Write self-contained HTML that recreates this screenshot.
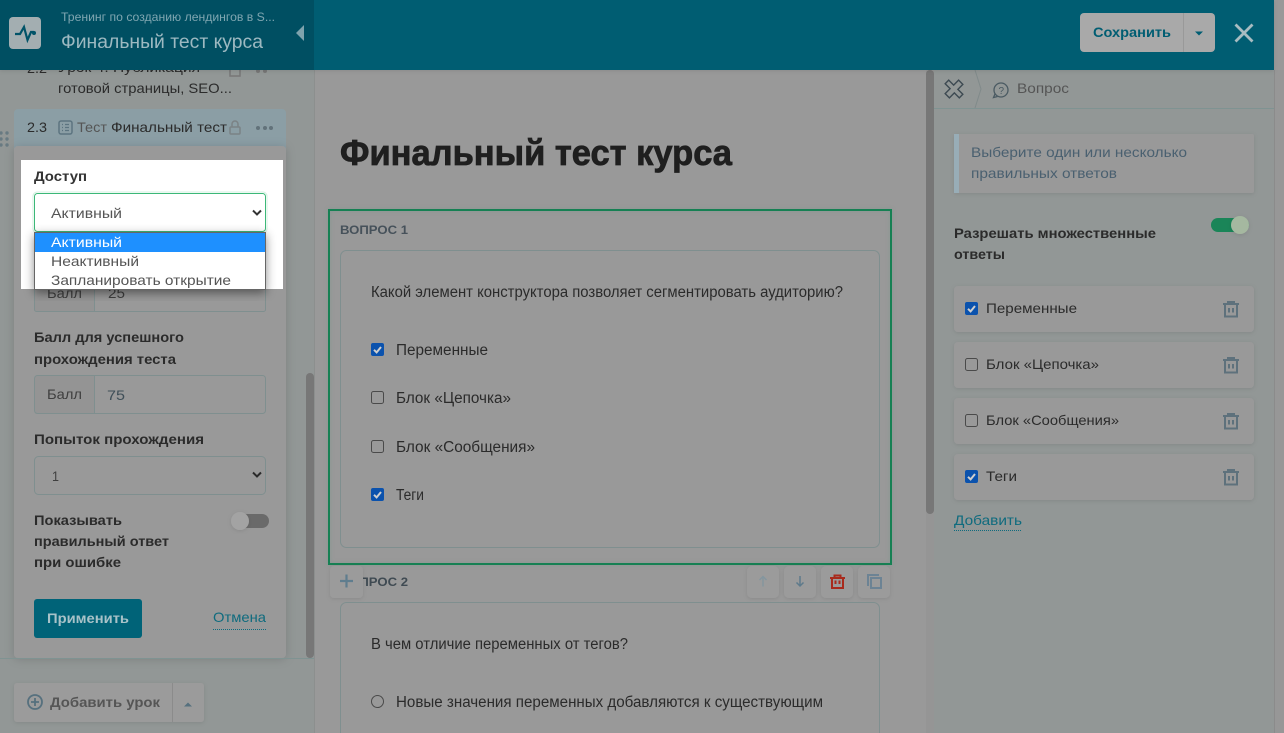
<!DOCTYPE html>
<html lang="ru"><head><meta charset="utf-8"><title>Финальный тест курса</title>
<style>
html,body{margin:0;padding:0;background:#999;overflow:hidden}
svg{display:block}
text{font-family:"Liberation Sans","DejaVu Sans",sans-serif;font-size:14px;fill:#2b2b2b}
.b{font-weight:bold}
</style></head><body>
<svg width="1284" height="733" viewBox="0 0 1284 733" xmlns="http://www.w3.org/2000/svg">
<defs>
<filter id="s" x="-20%" y="-20%" width="140%" height="140%"><feDropShadow dx="0" dy="1" stdDeviation="2" flood-color="#000" flood-opacity=".1"/></filter>
<filter id="p" x="-20%" y="-20%" width="140%" height="140%"><feDropShadow dx="0" dy="1" stdDeviation="5" flood-color="#000" flood-opacity=".16"/></filter>
<filter id="s2" x="-20%" y="-20%" width="140%" height="140%"><feDropShadow dx="0" dy="3" stdDeviation="5" flood-color="#000" flood-opacity=".45"/></filter>
<filter id="s3" x="-10%" y="-10%" width="120%" height="120%"><feDropShadow dx="0" dy="0" stdDeviation="2" flood-color="#1d8a5e" flood-opacity=".18"/></filter>
<g id="tr" fill="none" stroke="#5e717c" stroke-width="2"><path d="M0 3h16M5 3V1h6v2M2 3v12.500h12V3M6 7v4.500M10 7v4.500"/></g>
<g id="cb"><rect width="13" height="13" rx="2" fill="#0b52ad"/><path d="M3 6.800l2.600 2.600L10 4" fill="none" stroke="#cfcfcf" stroke-width="2"/></g>
<g id="cu"><rect x=".5" y=".5" width="12" height="12" rx="2" fill="#999" stroke="#4a4a4a"/></g>
</defs>

<!-- backgrounds -->
<rect width="1284" height="733" fill="#999"/>
<rect x="0" y="70" width="314" height="663" fill="#929796"/>
<rect x="314" y="70" width="1" height="663" fill="#8c8f8e"/>
<rect x="934" y="70" width="340" height="663" fill="#929796"/>
<rect x="926" y="70" width="8" height="663" fill="#959595"/>
<rect x="926" y="70" width="8" height="444" rx="4" fill="#777"/>
<rect x="1274" y="70" width="10" height="663" fill="#979797"/>
<rect x="1274" y="70" width="1" height="663" fill="#8b8b8b"/>

<!-- left list -->
<text x="27" y="73" textLength="20" lengthAdjust="spacingAndGlyphs">2.2</text>
<text x="58" y="72" textLength="142" lengthAdjust="spacingAndGlyphs">Урок 4. Публикация</text>
<text x="58" y="93" textLength="174" lengthAdjust="spacingAndGlyphs">готовой страницы, SEO...</text>
<rect x="230" y="69" width="10" height="7" fill="none" stroke="#777" stroke-width="1.5"/>
<circle cx="258" cy="71" r="2" fill="#777"/><circle cx="265" cy="71" r="2" fill="#777"/>
<rect x="14" y="109" width="272" height="50" rx="4" fill="#8b9ea5"/>
<text x="27" y="132" textLength="20" lengthAdjust="spacingAndGlyphs">2.3</text>
<rect x="59" y="121" width="13" height="13" rx="2" fill="none" stroke="#5c7480" stroke-width="1.5"/>
<path d="M62 124.500h1M65 124.500h4M62 127.500h1M65 127.500h4M62 130.500h1M65 130.500h4" stroke="#5c7480" stroke-width="1.200"/>
<text x="77" y="132" textLength="30" lengthAdjust="spacingAndGlyphs" style="fill:#555">Тест</text>
<text x="111" y="132" textLength="116" lengthAdjust="spacingAndGlyphs">Финальный тест</text>
<path d="M232 127v-3a3 3 0 0 1 6 0v3" fill="none" stroke="#7b8285" stroke-width="1.500"/><rect x="230" y="127" width="10" height="7" rx="1" fill="none" stroke="#7b8285" stroke-width="1.500"/>
<circle cx="258" cy="128" r="2" fill="#62727a"/><circle cx="265" cy="128" r="2" fill="#62727a"/><circle cx="271" cy="128" r="2" fill="#62727a"/>
<g fill="#687a82"><circle cx="1" cy="133" r="1.700"/><circle cx="7" cy="133" r="1.700"/><circle cx="1" cy="139" r="1.700"/><circle cx="7" cy="139" r="1.700"/><circle cx="1" cy="145" r="1.700"/><circle cx="7" cy="145" r="1.700"/></g>

<!-- left panel -->
<rect x="14" y="146" width="272" height="512" rx="4" fill="#999" filter="url(#p)"/>
<rect x="306" y="373" width="8" height="285" rx="4" fill="#777"/>
<rect x="0" y="658" width="314" height="1" fill="#7f9392"/>

<rect x="34.500" y="270" width="60" height="41" fill="#949494"/>
<rect x="34.500" y="270" width="231" height="41.500" rx="2" fill="none" stroke="#7f8f8f"/>
<path d="M94.500 270v41" stroke="#7f8f8f"/>
<text x="47" y="298" textLength="35" lengthAdjust="spacingAndGlyphs" style="fill:#3f3f3f">Балл</text>
<text x="108" y="298" textLength="17" lengthAdjust="spacingAndGlyphs" style="fill:#3f3f3f">25</text>

<text class="b" x="34" y="342" textLength="150" lengthAdjust="spacingAndGlyphs">Балл для успешного</text>
<text class="b" x="34" y="364" textLength="142" lengthAdjust="spacingAndGlyphs">прохождения теста</text>
<path d="M36 376h58.500v38H36a2 2 0 0 1-1-1V377z" fill="#949494"/>
<rect x="34.500" y="375.500" width="231" height="38" rx="3" fill="none" stroke="#7f8f8f"/>
<path d="M94.500 376v37" stroke="#7f8f8f"/>
<text x="47" y="399" textLength="35" lengthAdjust="spacingAndGlyphs" style="fill:#3f3f3f">Балл</text>
<text x="107" y="400" textLength="18" lengthAdjust="spacingAndGlyphs" style="fill:#3f4f58">75</text>
<text class="b" x="34" y="444" textLength="170" lengthAdjust="spacingAndGlyphs">Попыток прохождения</text>
<rect x="34.500" y="456.500" width="231" height="38" rx="4" fill="#999" stroke="#7f8f8f"/>
<text x="52" y="481" textLength="7" lengthAdjust="spacingAndGlyphs" style="fill:#3f3f3f">1</text>
<path d="M253 472.500l4 4 4-4" fill="none" stroke="#2a2a2a" stroke-width="2"/>
<text class="b" x="34" y="525" textLength="88" lengthAdjust="spacingAndGlyphs">Показывать</text>
<text class="b" x="34" y="546" textLength="135" lengthAdjust="spacingAndGlyphs">правильный ответ</text>
<text class="b" x="34" y="567" textLength="87" lengthAdjust="spacingAndGlyphs">при ошибке</text>
<rect x="232" y="514" width="37" height="14" rx="7" fill="#6a6a6a"/>
<circle cx="240" cy="521" r="9" fill="#a3a3a3" filter="url(#s)"/>
<rect x="34" y="599" width="108" height="39" rx="3" fill="#006378"/>
<text class="b" x="47" y="623" textLength="82" lengthAdjust="spacingAndGlyphs" style="fill:#a8c2c8">Применить</text>
<text x="213" y="622" textLength="53" lengthAdjust="spacingAndGlyphs" style="fill:#0f6b7e">Отмена</text>
<path d="M213 629.500h53" stroke="#0f6b7e" stroke-dasharray="1 1"/>

<!-- add lesson -->
<rect x="14" y="683" width="190" height="39" rx="3" fill="#9b9b9b" filter="url(#s)"/>
<rect x="172" y="683" width="1" height="39" fill="#8b8b8b"/>
<circle cx="35" cy="702" r="7" fill="none" stroke="#56707e" stroke-width="1.800"/>
<path d="M31 702h8M35 698v8" stroke="#56707e" stroke-width="1.800"/>
<text class="b" x="50" y="707" textLength="110" lengthAdjust="spacingAndGlyphs" style="fill:#555">Добавить урок</text>
<path d="M184 706.500l4-4 4 4z" fill="#56707e"/>

<!-- center -->
<text x="340" y="165" textLength="392" lengthAdjust="spacingAndGlyphs" class="b" style="font-size:36px;fill:#1f1f1f;stroke:#1f1f1f;stroke-width:.8">Финальный тест курса</text>
<rect x="329" y="210" width="562" height="354" fill="none" stroke="#178052" stroke-width="2" filter="url(#s3)"/>
<text class="b" x="340" y="234" textLength="68" lengthAdjust="spacingAndGlyphs" style="font-size:12px;fill:#46515a">ВОПРОС 1</text>
<rect x="340.500" y="250.500" width="539" height="297" rx="6" fill="#999" stroke="#7f8f8f"/>
<text x="371" y="297" textLength="472" lengthAdjust="spacingAndGlyphs" style="font-size:15.500px">Какой элемент конструктора позволяет сегментировать аудиторию?</text>
<use href="#cb" x="371" y="343"/><text x="396" y="355" textLength="92" lengthAdjust="spacingAndGlyphs" style="font-size:15.500px">Переменные</text>
<use href="#cu" x="371" y="391"/><text x="396" y="403" textLength="115" lengthAdjust="spacingAndGlyphs" style="font-size:15.500px">Блок «Цепочка»</text>
<use href="#cu" x="371" y="440"/><text x="396" y="452" textLength="139" lengthAdjust="spacingAndGlyphs" style="font-size:15.500px">Блок «Сообщения»</text>
<use href="#cb" x="371" y="488"/><text x="396" y="500" textLength="28" lengthAdjust="spacingAndGlyphs" style="font-size:15.500px">Теги</text>

<text class="b" x="340" y="586" textLength="68" lengthAdjust="spacingAndGlyphs" style="font-size:12px;fill:#3f4a52">ВОПРОС 2</text>
<rect x="330" y="566" width="33" height="32" rx="4" fill="#9b9b9b" filter="url(#s)"/>
<path d="M340 581h13M346.500 574.500v13" stroke="#5f7d8e" stroke-width="2.200"/>
<g filter="url(#s)"><rect x="747" y="566" width="32" height="32" rx="5" fill="#9b9b9b"/><rect x="784" y="566" width="32" height="32" rx="5" fill="#9b9b9b"/><rect x="821" y="566" width="32" height="32" rx="5" fill="#9b9b9b"/><rect x="858" y="566" width="32" height="32" rx="5" fill="#9b9b9b"/></g>
<path d="M763 586.500v-10M759.500 580l3.500-3.500 3.500 3.500" fill="none" stroke="#84969e" stroke-width="1.500"/>
<path d="M800 576v10M796.500 582.500l3.500 3.500 3.500-3.500" fill="none" stroke="#5e7a8b" stroke-width="1.500"/>
<g fill="none" stroke="#a82a1c" stroke-width="2"><path d="M830 578h15M834.500 578v-2.500h6v2.500M832 578v10h11v-10"/><path d="M835.500 580.500v3.500M839.500 580.500v3.500"/></g>
<g fill="none" stroke="#6c8394" stroke-width="2"><path d="M868 586v-11h11"/><rect x="871" y="578" width="10" height="10"/></g>

<rect x="340.500" y="602.500" width="539" height="140" rx="6" fill="#999" stroke="#7f8f8f"/>
<text x="371" y="649" textLength="257" lengthAdjust="spacingAndGlyphs" style="font-size:15.500px">В чем отличие переменных от тегов?</text>
<circle cx="377.500" cy="701.500" r="6" fill="none" stroke="#4a4a4a"/>
<text x="396" y="707" textLength="427" lengthAdjust="spacingAndGlyphs" style="font-size:15.500px">Новые значения переменных добавляются к существующим</text>

<!-- right panel -->
<rect x="934" y="108" width="340" height="1" fill="#7f9392"/>
<path d="M944 86.500h7v-7h6v7h7v5h-7v7h-6v-7h-7z" fill="none" stroke="#3d4a52" stroke-width="1.400" transform="rotate(45 954 89)"/>
<path d="M975 70l6 19-6 19" fill="none" stroke="#808a8a"/>
<circle cx="1001" cy="90" r="7" fill="none" stroke="#4a5a62" stroke-width="1.300"/><path d="M995 94l-1.500 3.500 4-1" fill="none" stroke="#4a5a62" stroke-width="1.300"/>
<text x="998.500" y="94" style="font-size:10px;fill:#4a5a62">?</text>
<text x="1017" y="93" textLength="52" lengthAdjust="spacingAndGlyphs" style="fill:#555">Вопрос</text>

<rect x="954" y="134" width="300" height="59" rx="2" fill="#999" filter="url(#s)"/>
<rect x="954" y="134" width="5" height="59" fill="#98adb7"/>
<text x="971" y="157" textLength="216" lengthAdjust="spacingAndGlyphs" style="fill:#4a6070">Выберите один или несколько</text>
<text x="971" y="178" textLength="146" lengthAdjust="spacingAndGlyphs" style="fill:#4a6070">правильных ответов</text>
<text class="b" x="954" y="238" textLength="202" lengthAdjust="spacingAndGlyphs">Разрешать множественные</text>
<text class="b" x="954" y="259" textLength="51" lengthAdjust="spacingAndGlyphs">ответы</text>
<rect x="1211" y="218" width="38" height="14" rx="7" fill="#1a8558"/>
<circle cx="1240" cy="225" r="9" fill="#a5b8a0" filter="url(#s)"/>

<g filter="url(#s)"><rect x="954" y="286" width="300" height="46" rx="4" fill="#999"/><rect x="954" y="342" width="300" height="46" rx="4" fill="#999"/><rect x="954" y="398" width="300" height="46" rx="4" fill="#999"/><rect x="954" y="454" width="300" height="46" rx="4" fill="#999"/></g>
<use href="#cb" x="965" y="302"/><text x="986" y="313" textLength="91" lengthAdjust="spacingAndGlyphs">Переменные</text>
<use href="#cu" x="965" y="358"/><text x="986" y="369" textLength="113" lengthAdjust="spacingAndGlyphs">Блок «Цепочка»</text>
<use href="#cu" x="965" y="414"/><text x="986" y="425" textLength="133" lengthAdjust="spacingAndGlyphs">Блок «Сообщения»</text>
<use href="#cb" x="965" y="470"/><text x="986" y="481" textLength="31" lengthAdjust="spacingAndGlyphs">Теги</text>
<use href="#tr" x="1223" y="301"/><use href="#tr" x="1223" y="357"/><use href="#tr" x="1223" y="413"/><use href="#tr" x="1223" y="469"/>
<text x="954" y="525" textLength="68" lengthAdjust="spacingAndGlyphs" style="fill:#0f6b7e">Добавить</text>
<path d="M954 530.500h68" stroke="#0f6b7e" stroke-dasharray="1 1"/>

<!-- header -->
<rect x="0" y="0" width="1274" height="70" fill="#005d72" filter="url(#s)"/>
<rect x="0" y="0" width="314" height="70" fill="#004f62"/>
<rect x="9" y="17" width="32" height="32" rx="4" fill="#a3aeb1"/>
<path d="M15 34h5l4-7 3.500 13 3.500-8h3" fill="none" stroke="#005368" stroke-width="2.200"/><circle cx="34" cy="33" r="2" fill="#005368"/>
<text x="61" y="21" textLength="214" lengthAdjust="spacingAndGlyphs" style="font-size:12px;fill:#7fa6b1">Тренинг по созданию лендингов в S...</text>
<text x="61" y="48" textLength="202" lengthAdjust="spacingAndGlyphs" style="font-size:19px;fill:#9db9c1">Финальный тест курса</text>
<path d="M304 25v16l-8-8z" fill="#7fa3ad"/>
<rect x="1080" y="13" width="135" height="39" rx="4" fill="#a9a9a9"/>
<rect x="1183" y="13" width="1" height="39" fill="#999"/>
<text class="b" x="1093" y="37" textLength="78" lengthAdjust="spacingAndGlyphs" style="fill:#005d72">Сохранить</text>
<path d="M1195 31.500h8l-4 4z" fill="#005d72"/>
<path d="M1235.500 24.500l17 17M1252.500 24.500l-17 17" stroke="#a8bcc1" stroke-width="2.800"/>

<!-- spotlight -->
<rect x="21" y="160" width="262" height="129" fill="#fff"/>
<text class="b" x="34" y="181" textLength="53" lengthAdjust="spacingAndGlyphs" style="fill:#333">Доступ</text>
<rect x="34.500" y="193.500" width="231" height="38" rx="3" fill="#fff" stroke="#3cb878"/>
<rect x="33" y="192" width="234" height="41" rx="4" fill="none" stroke="#d4f0e1"/>
<text x="51" y="218" textLength="71" lengthAdjust="spacingAndGlyphs" style="fill:#555">Активный</text>
<path d="M253 210.500l4 4 4-4" fill="none" stroke="#333" stroke-width="2"/>
<rect x="34.500" y="232.500" width="231" height="57" fill="#fff" stroke="#666" filter="url(#s2)"/>
<rect x="35" y="233" width="230" height="19" fill="#1e90ff"/>
<text x="51" y="247" textLength="71" lengthAdjust="spacingAndGlyphs" style="fill:#fff">Активный</text>
<text x="51" y="266" textLength="88" lengthAdjust="spacingAndGlyphs" style="fill:#555">Неактивный</text>
<text x="51" y="285" textLength="180" lengthAdjust="spacingAndGlyphs" style="fill:#555">Запланировать открытие</text>
</svg>
</body></html>
